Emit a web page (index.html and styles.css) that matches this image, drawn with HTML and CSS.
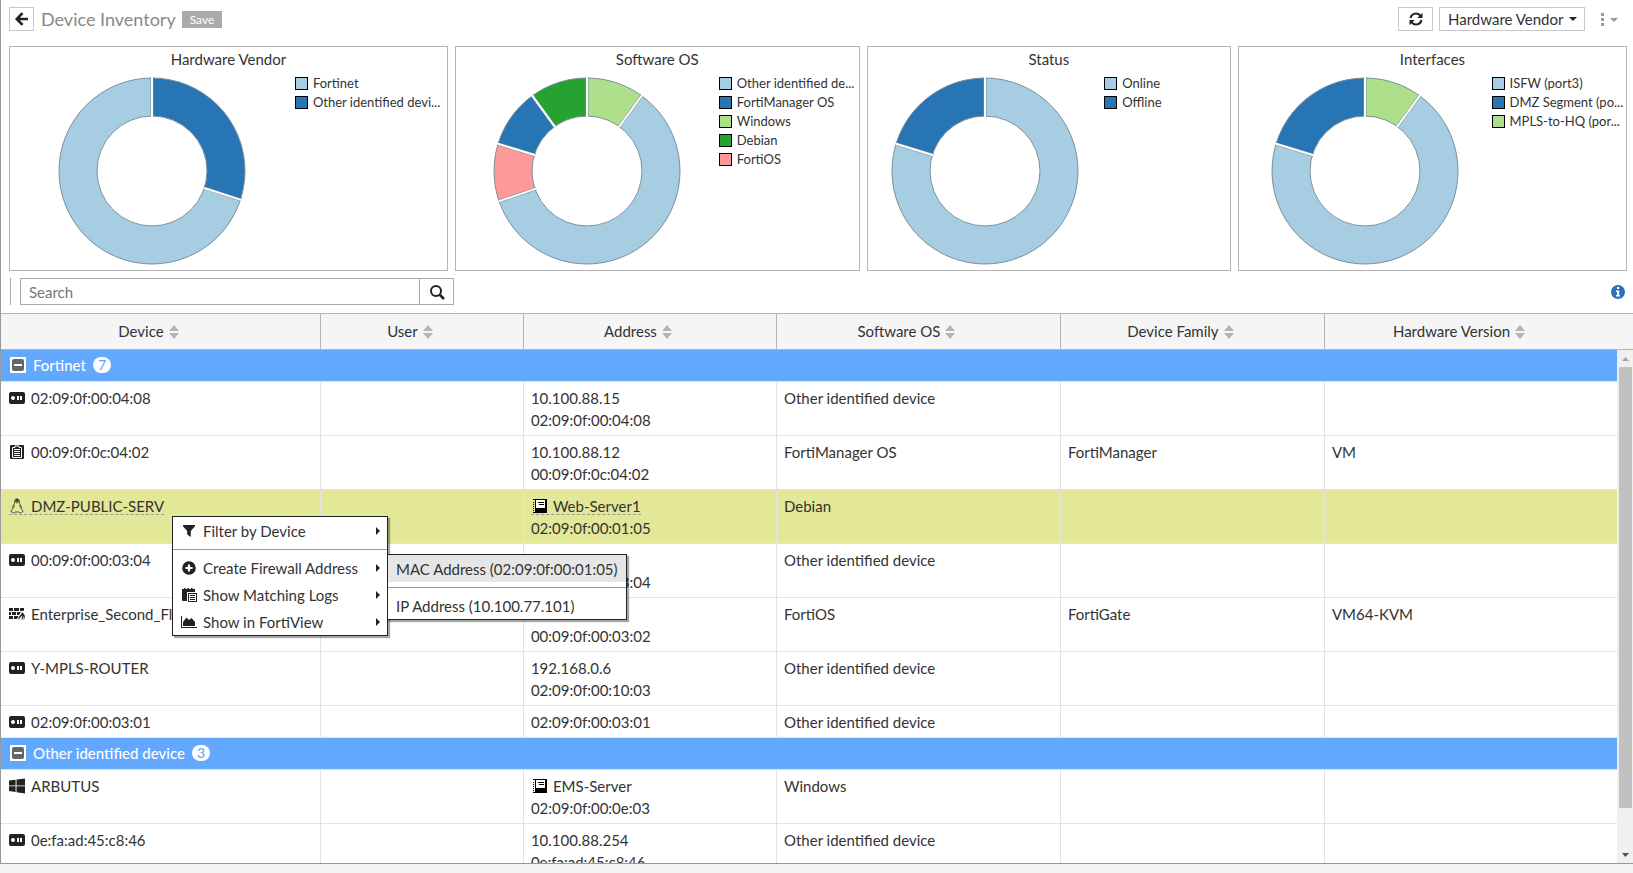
FILE: index.html
```
<!DOCTYPE html>
<html lang="en">
<head>
    <meta charset="UTF-8">
    <meta name="viewport" content="width=device-width, initial-scale=1.0">
    <title>Device Inventory</title>
    <link rel="stylesheet" href="styles.css">
</head>
<body>
    <!-- Icons -->
    <svg class="sprite" aria-hidden="true">
        <symbol id="i-router" viewBox="0 0 16 16">
            <path fill-rule="evenodd" d="M2 2h12a2 2 0 0 1 2 2v8a2 2 0 0 1-2 2H2a2 2 0 0 1-2-2V4a2 2 0 0 1 2-2zM4 6a2 2 0 1 0 0 4 2 2 0 0 0 0-4zM8 6v4h2V6zM11 6v4h2V6z"/>
        </symbol>
        <symbol id="i-clipboard" viewBox="0 0 16 16">
            <path d="M1 2a1 1 0 0 1 1-1h12a1 1 0 0 1 1 1v12a1 1 0 0 1-1 1H2a1 1 0 0 1-1-1z"/>
            <path d="M3.500 3.500H6V2h4v1.500h2.500v10h-9z" fill="none" stroke="#fff"/>
            <path d="M5 5.500h6M5 7.500h6M5 9.500h6M5 11.500h6" stroke="#fff" fill="none"/>
        </symbol>
        <symbol id="i-linux" viewBox="0 0 16 16">
            <path d="M8 .8c1.600 0 2.400 1.200 2.300 3 0 1.500.5 2.300 1.400 3.600.9 1.400 1.200 2.700.9 4.100l1.600 1.800-2.900 1.900-1.400-1.200H6.100l-1.400 1.200-2.900-1.900 1.600-1.800c-.3-1.400 0-2.700.9-4.100.9-1.300 1.400-2.100 1.400-3.600C5.600 2 6.400.8 8 .8z" fill="none" stroke="#333" stroke-width=".8"/>
            <path d="M6.200 1.800C7 .7 9 .7 9.800 1.800v2.400L8 5.500 6.200 4.200zM4.200 8.500l1.500-2.300-.8 4.600zM11.800 8.500l-1.500-2.300.8 4.600z" fill="#333"/>
            <path d="M6.700 3.500h1v1h-1zM8.400 3.500h1v1h-1z" fill="#e2e898"/>
        </symbol>
        <symbol id="i-firewall" viewBox="0 0 16 16">
            <path d="M0 2h4v3H0zM5 2h5v3H5zM11 2h4v2.500L13.500 5H11zM0 6h2v3H0zM3 6h4v3H3zM8 6h4L10 9H8zM0 10h4v3H0zM5 10h4.500L8 13H5z"/>
            <path d="M13 6c.4 2-3.600 4-3.600 7 0 .4.300.8.600 1 0-2 2.400-3 2.400-4.500.8 1 .6 2.500 0 4.500 2-1 1.800-3 1.200-4.500 1 .8 1.400 2.500.9 4.500 2.200-2.500 1.800-5.500-1.500-8z"/>
        </symbol>
        <symbol id="i-windows" viewBox="0 0 16 16">
            <path d="M0 2.600 6.600 1.700v5.700H0zM7.500 1.600 16 .4v7H7.500zM0 8.300h6.600V14L0 13.100zM7.500 8.300H16v7.200l-8.500-1.200z"/>
        </symbol>
        <symbol id="i-book" viewBox="0 0 16 16">
            <path d="M4 1h12v14H4z" fill="#000"/>
            <path d="M5 2h9v8H5z" fill="#fff" class="book-page"/>
            <path d="M7 4.500h6M8 6.500h5" stroke="#000"/>
            <path d="M2 1.500h2M2 4.500h1M2 6.500h1M2 8.500h1M2 10.500h1M2 12.500h1M2 14.500h2" stroke="#000"/>
        </symbol>
        <symbol id="i-filter" viewBox="0 0 16 16">
            <path d="M2 2h12v1.200L9.800 8v6L6.200 11.500V8L2 3.200z"/>
        </symbol>
        <symbol id="i-plus" viewBox="0 0 16 16">
            <path fill-rule="evenodd" d="M8 1.200a6.800 6.800 0 1 1 0 13.600A6.800 6.800 0 0 1 8 1.200zM6.900 4.400v2.500H4.400v2.200h2.500v2.500h2.200V9.100h2.500V6.900H9.100V4.400z"/>
        </symbol>
        <symbol id="i-logs" viewBox="0 0 16 16">
            <path d="M1 2h2V1h1.500v1h2V1H8v1h2V1h1.500v1H14v3H1zM1 5h5v9H2a1 1 0 0 1-1-1z"/>
            <path fill-rule="evenodd" d="M7 6h9v9H7zM8 7v7h7V7z"/>
            <path d="M9 8.500h5M9 10.500h5M9 12.500h5" stroke="#222"/>
        </symbol>
        <symbol id="i-chart" viewBox="0 0 16 16">
            <path d="M0 2h1v11h15v1H0zM2 12V8l3.500-4.500L8 6l2.500-2L14 8v4z"/>
        </symbol>
        <symbol id="i-sort" viewBox="0 0 10 14">
            <path d="M5 0l5 6H0zM5 14l5-6H0z"/>
        </symbol>
        <symbol id="i-minus" viewBox="0 0 16 16">
            <path d="M0 0h16v16H0z" fill="#fff"/>
            <rect x="2" y="2" width="12" height="12" rx="2" fill="#666"/>
            <path d="M4 7h8v2H4z" fill="#fff"/>
        </symbol>
    </svg>

    <div class="page">
        <!-- Toolbar -->
        <header class="toolbar">
            <button class="btn btn-back" aria-label="Back">
                <svg width="14" height="14" viewBox="0 0 14 14"><path d="M7.500 1.200 1.800 7l5.700 5.800M2.500 7H13" fill="none" stroke="#222" stroke-width="2.600"/></svg>
            </button>
            <h1 class="page-title">Device Inventory</h1>
            <button class="btn-save">Save</button>
            <div class="toolbar-right">
                <button class="btn btn-refresh" aria-label="Refresh">
                    <svg width="14" height="14" viewBox="0 0 14 14"><path d="M1.500 6A5.600 5.600 0 0 1 11.500 3.800M12.500 8A5.600 5.600 0 0 1 2.500 10.200" fill="none" stroke="#222" stroke-width="2"/><path d="M13.500.8V6H8.300zM.5 13.200V8h5.200z" fill="#222"/></svg>
                </button>
                <div class="select-box">
                    <select aria-label="Group by">
                        <option>Hardware Vendor</option>
                    </select>
                    <svg class="caret" width="8" height="4" viewBox="0 0 8 4"><path d="M0 0h8L4 4z"/></svg>
                </div>
                <button class="btn-more" aria-label="More">
                    <svg width="18" height="14" viewBox="0 0 18 14"><path d="M1 1h3v3H1zM1 6h3v3H1zM1 11h3v3H1zM10 6h8l-4 4z"/></svg>
                </button>
            </div>
        </header>

        <!-- Charts -->
        <section class="cards">
            <div class="card card-vendor">
                <h2>Hardware Vendor</h2>
                <div class="card-body">
                    <svg class="donut" viewBox="-94 -94 188 188">
                        <g transform="rotate(-90)">
                            <circle class="seg blue" r="74" pathLength="360" stroke-dasharray="108 360"/>
                            <circle class="seg sky" r="74" pathLength="360" stroke-dasharray="252 360" stroke-dashoffset="-108"/>
                            <circle class="edge" r="93"/><circle class="edge" r="55"/>
                            <path class="cut-edge" d="M54 0h40"/><path class="cut" d="M54 0h41"/>
                            <g transform="rotate(108)"><path class="cut-edge" d="M54 0h40"/><path class="cut" d="M54 0h41"/></g>
                        </g>
                    </svg>
                    <ul class="legend">
                        <li><span class="swatch sky"></span>Fortinet</li>
                        <li><span class="swatch blue"></span>Other identified devi...</li>
                    </ul>
                </div>
            </div>
            <div class="card card-os">
                <h2>Software OS</h2>
                <div class="card-body">
                    <svg class="donut" viewBox="-94 -94 188 188">
                        <g transform="rotate(-90)">
                            <circle class="seg lime" r="74" pathLength="360" stroke-dasharray="36 360"/>
                            <circle class="seg sky" r="74" pathLength="360" stroke-dasharray="215 360" stroke-dashoffset="-36"/>
                            <circle class="seg pink" r="74" pathLength="360" stroke-dasharray="36 360" stroke-dashoffset="-251"/>
                            <circle class="seg blue" r="74" pathLength="360" stroke-dasharray="37 360" stroke-dashoffset="-287"/>
                            <circle class="seg green" r="74" pathLength="360" stroke-dasharray="36 360" stroke-dashoffset="-324"/>
                            <circle class="edge" r="93"/><circle class="edge" r="55"/>
                            <path class="cut-edge" d="M54 0h40"/><path class="cut" d="M54 0h41"/>
                            <g transform="rotate(36)"><path class="cut-edge" d="M54 0h40"/><path class="cut" d="M54 0h41"/></g>
                            <g transform="rotate(251)"><path class="cut-edge" d="M54 0h40"/><path class="cut" d="M54 0h41"/></g>
                            <g transform="rotate(287)"><path class="cut-edge" d="M54 0h40"/><path class="cut" d="M54 0h41"/></g>
                            <g transform="rotate(324)"><path class="cut-edge" d="M54 0h40"/><path class="cut" d="M54 0h41"/></g>
                        </g>
                    </svg>
                    <ul class="legend">
                        <li><span class="swatch sky"></span>Other identified de...</li>
                        <li><span class="swatch blue"></span>FortiManager OS</li>
                        <li><span class="swatch lime"></span>Windows</li>
                        <li><span class="swatch green"></span>Debian</li>
                        <li><span class="swatch pink"></span>FortiOS</li>
                    </ul>
                </div>
            </div>
            <div class="card card-status">
                <h2>Status</h2>
                <div class="card-body">
                    <svg class="donut" viewBox="-94 -94 188 188">
                        <g transform="rotate(-90)">
                            <circle class="seg sky" r="74" pathLength="360" stroke-dasharray="287 360"/>
                            <circle class="seg blue" r="74" pathLength="360" stroke-dasharray="73 360" stroke-dashoffset="-287"/>
                            <circle class="edge" r="93"/><circle class="edge" r="55"/>
                            <path class="cut-edge" d="M54 0h40"/><path class="cut" d="M54 0h41"/>
                            <g transform="rotate(287)"><path class="cut-edge" d="M54 0h40"/><path class="cut" d="M54 0h41"/></g>
                        </g>
                    </svg>
                    <ul class="legend">
                        <li><span class="swatch sky"></span>Online</li>
                        <li><span class="swatch blue"></span>Offline</li>
                    </ul>
                </div>
            </div>
            <div class="card card-interfaces">
                <h2>Interfaces</h2>
                <div class="card-body">
                    <svg class="donut" viewBox="-94 -94 188 188">
                        <g transform="rotate(-90)">
                            <circle class="seg lime" r="74" pathLength="360" stroke-dasharray="36 360"/>
                            <circle class="seg sky" r="74" pathLength="360" stroke-dasharray="251 360" stroke-dashoffset="-36"/>
                            <circle class="seg blue" r="74" pathLength="360" stroke-dasharray="73 360" stroke-dashoffset="-287"/>
                            <circle class="edge" r="93"/><circle class="edge" r="55"/>
                            <path class="cut-edge" d="M54 0h40"/><path class="cut" d="M54 0h41"/>
                            <g transform="rotate(36)"><path class="cut-edge" d="M54 0h40"/><path class="cut" d="M54 0h41"/></g>
                            <g transform="rotate(287)"><path class="cut-edge" d="M54 0h40"/><path class="cut" d="M54 0h41"/></g>
                        </g>
                    </svg>
                    <ul class="legend">
                        <li><span class="swatch sky"></span>ISFW (port3)</li>
                        <li><span class="swatch blue"></span>DMZ Segment (po...</li>
                        <li><span class="swatch lime"></span>MPLS-to-HQ (por...</li>
                    </ul>
                </div>
            </div>
        </section>

        <!-- Search -->
        <div class="search-row">
            <form class="search">
                <input type="text" placeholder="Search" aria-label="Search">
                <button type="button" aria-label="Search">
                    <svg width="16" height="16" viewBox="0 0 16 16"><circle cx="7" cy="7" r="5" fill="none" stroke="#222" stroke-width="2"/><path d="M10.500 10.500 15 15" stroke="#222" stroke-width="2.600"/></svg>
                </button>
            </form>
            <svg class="info" width="14" height="14" viewBox="0 0 14 14"><circle cx="7" cy="7" r="7" fill="#2f6fb8"/><path d="M6 2h2.200v2H6zM5 5.500h3.200V10H9v1.500H5V10h1V7H5z" fill="#fff"/></svg>
        </div>

        <!-- Device table -->
        <div class="table-area">
            <div class="table-wrap">
                <table class="devices">
                    <colgroup>
                        <col class="col-device"><col class="col-user"><col class="col-address"><col class="col-os"><col class="col-family"><col class="col-hw">
                    </colgroup>
                    <thead>
                        <tr>
                            <th>Device<svg class="sort"><use href="#i-sort"/></svg></th>
                            <th>User<svg class="sort"><use href="#i-sort"/></svg></th>
                            <th>Address<svg class="sort"><use href="#i-sort"/></svg></th>
                            <th>Software OS<svg class="sort"><use href="#i-sort"/></svg></th>
                            <th>Device Family<svg class="sort"><use href="#i-sort"/></svg></th>
                            <th>Hardware Version<svg class="sort"><use href="#i-sort"/></svg></th>
                        </tr>
                    </thead>
                    <tbody>
                        <tr class="group">
                            <td colspan="6"><div class="group-label"><svg class="icon"><use href="#i-minus"/></svg>Fortinet<span class="badge">7</span></div></td>
                        </tr>
                        <tr>
                            <td><svg class="icon"><use href="#i-router"/></svg>02:09:0f:00:04:08</td>
                            <td></td>
                            <td>10.100.88.15<br>02:09:0f:00:04:08</td>
                            <td>Other identified device</td>
                            <td></td>
                            <td></td>
                        </tr>
                        <tr>
                            <td><svg class="icon"><use href="#i-clipboard"/></svg>00:09:0f:0c:04:02</td>
                            <td></td>
                            <td>10.100.88.12<br>00:09:0f:0c:04:02</td>
                            <td>FortiManager OS</td>
                            <td>FortiManager</td>
                            <td>VM</td>
                        </tr>
                        <tr class="selected">
                            <td><span class="hint"><svg class="icon"><use href="#i-linux"/></svg>DMZ-PUBLIC-SERV</span></td>
                            <td></td>
                            <td><span class="hint"><svg class="icon"><use href="#i-book"/></svg>Web-Server1</span><br>02:09:0f:00:01:05</td>
                            <td>Debian</td>
                            <td></td>
                            <td></td>
                        </tr>
                        <tr>
                            <td><svg class="icon"><use href="#i-router"/></svg>00:09:0f:00:03:04</td>
                            <td></td>
                            <td><br>00:09:0f:00:03:04</td>
                            <td>Other identified device</td>
                            <td></td>
                            <td></td>
                        </tr>
                        <tr>
                            <td><svg class="icon"><use href="#i-firewall"/></svg>Enterprise_Second_Floor</td>
                            <td></td>
                            <td><br>00:09:0f:00:03:02</td>
                            <td>FortiOS</td>
                            <td>FortiGate</td>
                            <td>VM64-KVM</td>
                        </tr>
                        <tr>
                            <td><svg class="icon"><use href="#i-router"/></svg>Y-MPLS-ROUTER</td>
                            <td></td>
                            <td>192.168.0.6<br>02:09:0f:00:10:03</td>
                            <td>Other identified device</td>
                            <td></td>
                            <td></td>
                        </tr>
                        <tr>
                            <td><svg class="icon"><use href="#i-router"/></svg>02:09:0f:00:03:01</td>
                            <td></td>
                            <td>02:09:0f:00:03:01</td>
                            <td>Other identified device</td>
                            <td></td>
                            <td></td>
                        </tr>
                        <tr class="group">
                            <td colspan="6"><div class="group-label"><svg class="icon"><use href="#i-minus"/></svg>Other identified device<span class="badge">3</span></div></td>
                        </tr>
                        <tr>
                            <td><svg class="icon"><use href="#i-windows"/></svg>ARBUTUS</td>
                            <td></td>
                            <td><svg class="icon"><use href="#i-book"/></svg>EMS-Server<br>02:09:0f:00:0e:03</td>
                            <td>Windows</td>
                            <td></td>
                            <td></td>
                        </tr>
                        <tr>
                            <td><svg class="icon"><use href="#i-router"/></svg>0e:fa:ad:45:c8:46</td>
                            <td></td>
                            <td>10.100.88.254<br>0e:fa:ad:45:c8:46</td>
                            <td>Other identified device</td>
                            <td></td>
                            <td></td>
                        </tr>
                    </tbody>
                </table>
            </div>
            <div class="scroll">
                <div class="scroll-head"></div>
                <div class="scroll-arrow"><svg width="7" height="4" viewBox="0 0 7 4"><path d="M0 4h7L3.500 0z" fill="#a3a3a3"/></svg></div>
                <div class="scroll-track"><div class="scroll-thumb"></div></div>
                <div class="scroll-arrow"><svg width="7" height="4" viewBox="0 0 7 4"><path d="M0 0h7L3.500 4z" fill="#505050"/></svg></div>
            </div>
        </div>

        <!-- Context menu -->
        <div class="menu context-menu">
            <button class="menu-item"><svg class="icon"><use href="#i-filter"/></svg>Filter by Device<span class="arrow"></span></button>
            <hr>
            <div class="menu-parent">
                <button class="menu-item"><svg class="icon"><use href="#i-plus"/></svg>Create Firewall Address<span class="arrow"></span></button>
                <div class="menu submenu">
                    <button class="menu-item active">MAC Address (02:09:0f:00:01:05)</button>
                    <hr>
                    <button class="menu-item">IP Address (10.100.77.101)</button>
                </div>
            </div>
            <button class="menu-item"><svg class="icon"><use href="#i-logs"/></svg>Show Matching Logs<span class="arrow"></span></button>
            <button class="menu-item"><svg class="icon"><use href="#i-chart"/></svg>Show in FortiView<span class="arrow"></span></button>
        </div>
    </div>
</body>
</html>
```

FILE: styles.css
```
* {
    box-sizing: border-box;
}
body {
    margin: 0;
    font-family: Lato, sans-serif;
    font-size: 15px;
    line-height: 22px;
    color: #333;
    background: #f5f5f5;
}
button, input, select {
    font: inherit;
    color: inherit;
}
.sprite {
    display: none;
}
.page {
    position: relative;
    display: flex;
    flex-direction: column;
    height: 100vh;
    padding-bottom: 9px;
}

/* Toolbar */
.toolbar {
    display: flex;
    align-items: center;
    height: 46px;
    padding: 0 15px 8px 8px;
    background: #fff;
    border-left: 1px solid #999;
}
.btn {
    display: flex;
    align-items: center;
    justify-content: center;
    height: 24px;
    padding: 0;
    background: #fff;
    border: 1px solid #c8c8c8;
}
.btn-back {
    width: 25px;
}
.btn-refresh {
    width: 35px;
}
.page-title {
    margin: 0 6px 0 7px;
    font-size: 18px;
    font-weight: 400;
    color: #888;
}
.btn-save {
    height: 17px;
    padding: 0 8px;
    font-size: 12px;
    line-height: 17px;
    color: #fff;
    background: #aaa;
    border: 0;
}
.toolbar-right {
    display: flex;
    align-items: center;
    gap: 6px;
    margin-left: auto;
}
.select-box {
    position: relative;
}
.select-box select {
    display: block;
    height: 24px;
    padding: 0 20px 0 8px;
    line-height: 22px;
    appearance: none;
    background: #fff;
    border: 1px solid #c8c8c8;
    border-radius: 0;
}
.select-box .caret {
    position: absolute;
    right: 8px;
    top: 10px;
    fill: #222;
}
.btn-more {
    display: flex;
    margin-left: 9px;
    padding: 0;
    background: none;
    border: 0;
    fill: #999;
}

/* Charts */
.cards {
    display: flex;
    gap: 7px;
    padding: 0 6px 0 8px;
    background: #fff;
    border-left: 1px solid #999;
}
.card {
    min-width: 0;
    border: 1px solid #b4b4b4;
}
.card-vendor {
    flex: 439 1 0;
}
.card-os {
    flex: 405 1 0;
}
.card-status {
    flex: 364 1 0;
}
.card-interfaces {
    flex: 389 1 0;
}
.card h2 {
    margin: 0;
    padding-bottom: 2px;
    font-size: 15px;
    font-weight: 400;
    line-height: 24px;
    text-align: center;
}
.card-body {
    display: grid;
    grid-template-columns: 65% 35%;
    padding-bottom: 5px;
}
.donut {
    width: 188px;
    height: 188px;
    margin-top: 4px;
    justify-self: center;
}
.seg {
    fill: none;
    stroke-width: 38;
}
.edge {
    fill: none;
    stroke: #7d8f9b;
}
.cut-edge {
    stroke: #7d8f9b;
    stroke-width: 3;
}
.cut {
    stroke: #fff;
    stroke-width: 2;
}
.sky {
    stroke: #a6cde2;
    background: #a6cde2;
}
.blue {
    stroke: #2775b4;
    background: #2775b4;
}
.lime {
    stroke: #aedf8a;
    background: #aedf8a;
}
.green {
    stroke: #25a22f;
    background: #25a22f;
}
.pink {
    stroke: #fd9a99;
    background: #fd9a99;
}
.legend {
    margin: 1px 0 0 1px;
    padding: 0;
    list-style: none;
    font-size: 13px;
    line-height: 19px;
    white-space: nowrap;
}
.legend li {
    display: flex;
    align-items: center;
    gap: 5px;
}
.swatch {
    flex: none;
    width: 13px;
    height: 13px;
    border: 1px solid #000;
}

/* Search */
.search-row {
    display: flex;
    align-items: center;
    justify-content: space-between;
    padding: 7px 8px 8px 9px;
    background: #fff;
    border-left: 1px solid #999;
}
.search {
    display: flex;
    padding-left: 9px;
    border-left: 1px solid #aaa;
}
.search input {
    width: 399px;
    height: 27px;
    padding: 0 8px;
    border: 1px solid #aaa;
    border-right: 0;
}
.search input::placeholder {
    color: #777;
}
.search button {
    display: flex;
    align-items: center;
    justify-content: center;
    width: 35px;
    padding: 0;
    background: #fff;
    border: 1px solid #aaa;
}

/* Device table */
.table-area {
    display: flex;
    flex: 1;
    min-height: 0;
    background: #fff;
    border-left: 1px solid #999;
    border-bottom: 1px solid #999;
}
.table-wrap {
    flex: 1;
    overflow: hidden;
}
.devices {
    width: 100%;
    table-layout: fixed;
    border-spacing: 0;
}
.col-device {
    width: 19.8%;
}
.col-user {
    width: 12.56%;
}
.col-address {
    width: 15.66%;
}
.col-os {
    width: 17.57%;
}
.col-family {
    width: 16.34%;
}
.devices th {
    height: 37px;
    padding: 0 24px 2px 0;
    font-weight: 400;
    background: #f5f5f5;
    border: 1px solid #b4b4b4;
    border-left: 0;
}
.devices td {
    padding: 5px 7px 4px;
    vertical-align: top;
    white-space: nowrap;
    border-right: 1px solid #e3e3e3;
    border-bottom: 1px solid #e3e3e3;
}
.devices td:first-child {
    padding-left: 8px;
}
.devices th:last-child, .devices td:last-child {
    border-right: 0;
}
.devices .sort {
    width: 10px;
    height: 14px;
    margin-left: 5px;
    vertical-align: -2px;
    fill: #b4b4b4;
}
.icon {
    width: 16px;
    height: 16px;
    margin-right: 6px;
    vertical-align: -2px;
    fill: #222;
}
.devices .group td {
    padding: 4px 9px 5px;
    color: #fff;
    font-weight: 500;
    background: #62a8ff;
}
.group-label {
    display: flex;
    align-items: center;
}
.group-label .icon {
    margin-right: 7px;
}
.badge {
    margin-left: 7px;
    padding: 0 5px;
    font-size: 14px;
    line-height: 16px;
    color: #62a8ff;
    background: #fff;
    border-radius: 8px;
}
.selected td {
    background: #e2e898;
}
.hint {
    display: inline-block;
    height: 20px;
    line-height: 22px;
    vertical-align: top;
    border-bottom: 1px dashed #999;
}

/* Scrollbar */
.scroll {
    display: flex;
    flex-direction: column;
    width: 16px;
    background: #f0f0f0;
}
.scroll-head {
    height: 37px;
    background: #f5f5f5;
    border: 1px solid #b4b4b4;
    border-width: 1px 0;
}
.scroll-arrow {
    display: flex;
    align-items: center;
    justify-content: center;
    height: 17px;
}
.scroll-track {
    flex: 1;
    padding: 0 1px 0 2px;
}
.scroll-thumb {
    height: 92%;
    background: #c1c1c1;
}

/* Context menu */
.menu {
    position: absolute;
    background: #fff;
    border: 1px solid #222;
    box-shadow: 2px 2px 1px rgba(0, 0, 0, 0.35);
}
.context-menu {
    left: 172px;
    top: 516px;
    width: 216px;
}
.menu-parent {
    position: relative;
}
.submenu {
    left: 100%;
    top: 0;
    width: 240px;
}
.menu hr {
    margin: 5px 0 4px;
    border: 0;
    border-top: 1px solid #999;
}
.menu-item {
    display: flex;
    align-items: center;
    width: 100%;
    height: 27px;
    padding: 0 7px 0 8px;
    white-space: nowrap;
    background: none;
    border: 0;
}
.menu-item.active {
    background: #e6e6e6;
}
.arrow {
    margin-left: auto;
    border: 4px solid transparent;
    border-left-color: #222;
    border-right: 0;
}
```
